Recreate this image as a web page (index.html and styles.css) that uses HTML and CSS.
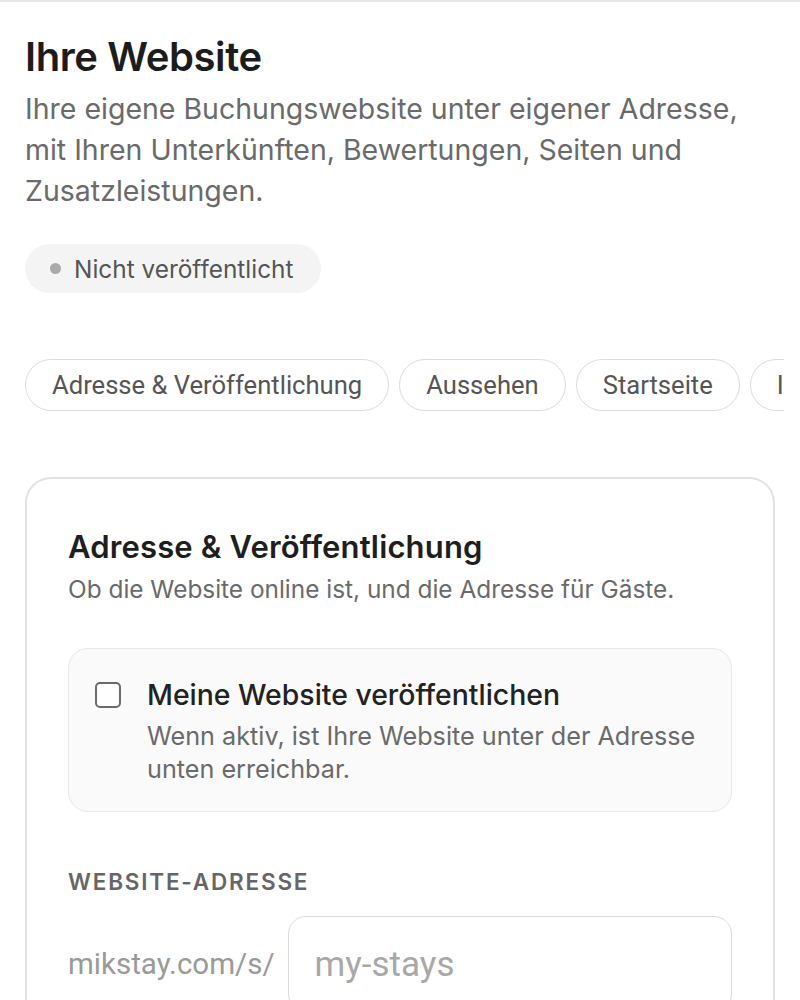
FILE: index.html
```html
<!DOCTYPE html>
<html lang="de">
<head>
<meta charset="utf-8">
<title>Ihre Website</title>
<link rel="stylesheet" href="styles.css">
</head>
<body>
<div class="page">
  <h1 class="title">Ihre Website</h1>
  <p class="lead">Ihre eigene Buchungswebsite unter eigener Adresse, mit Ihren Unterkünften, Bewertungen, Seiten und Zusatzleistungen.</p>
  <div class="status"><span class="dot"></span>Nicht veröffentlicht</div>

  <nav class="tabs">
    <button class="tab">Adresse &amp; Veröffentlichung</button>
    <button class="tab">Aussehen</button>
    <button class="tab">Startseite</button>
    <button class="tab">Inhalte</button>
  </nav>

  <section class="card">
    <h2 class="card-title">Adresse &amp; Veröffentlichung</h2>
    <p class="card-sub">Ob die Website online ist, und die Adresse für Gäste.</p>

    <label class="option">
      <span class="checkbox"></span>
      <span class="option-text">
        <span class="option-title">Meine Website veröffentlichen</span>
        <span class="option-desc">Wenn aktiv, ist Ihre Website unter der Adresse unten erreichbar.</span>
      </span>
    </label>

    <div class="field-label">WEBSITE-ADRESSE</div>
    <div class="address">
      <span class="prefix">mikstay.com/s/</span>
      <div class="input"><span class="placeholder">my-stays</span></div>
    </div>
  </section>
</div>
</body>
</html>
```

FILE: styles.css
```css
* { box-sizing: border-box; }
html, body { margin: 0; padding: 0; background: #fff; }
body {
  font-family: Inter, "Noto Sans", sans-serif;
  color: #222;
  border-top: 2px solid #e6e6e6;
  overflow: hidden;
}
.page {
  padding: 30px 25px 0 25px;
}
.title {
  margin: 0;
  font-size: 40px;
  line-height: 50px;
  font-weight: 600;
  letter-spacing: -0.01em;
  color: #1c1c1c;
}
.lead {
  margin: 6px 0 0 0;
  font-size: 28.5px;
  line-height: 41px;
  color: #6a6a6a;
  max-width: 740px;
}
.status {
  display: inline-flex;
  align-items: center;
  gap: 13px;
  margin-top: 33px;
  height: 49px;
  padding: 0 28px 0 25px;
  border-radius: 999px;
  background: #f4f4f4;
  font-size: 24.4px;
  font-weight: 400;
  color: #555;
}
.dot {
  width: 11px;
  height: 11px;
  border-radius: 50%;
  background: #aaaaaa;
}
.tabs {
  display: flex;
  gap: 10px;
  margin-top: 66px;
  margin-right: -9px;
  overflow: hidden;
}
.tab {
  flex: 0 0 auto;
  height: 52px;
  padding: 0 26px;
  border: 1.5px solid #dcdcdc;
  border-radius: 999px;
  background: #fff;
  font-family: Roboto, "Liberation Sans", sans-serif;
  font-size: 25.6px;
  color: #555;
}
.card {
  margin-top: 66px;
  border: 2px solid #e2e2e2;
  border-radius: 26px;
  padding: 48px 41px 40px 41px;
}
.card-title {
  margin: 0;
  font-size: 31px;
  line-height: 40px;
  font-weight: 600;
  letter-spacing: 0.005em;
  color: #1e1e1e;
}
.card-sub {
  margin: 6px 0 0 0;
  font-size: 24.4px;
  line-height: 32px;
  color: #6a6a6a;
}
.option {
  display: flex;
  align-items: flex-start;
  gap: 26px;
  margin-top: 43px;
  padding: 27px 26px 25px 26px;
  background: #fafafa;
  border: 1.5px solid #e8e8e8;
  border-radius: 20px;
}
.checkbox {
  flex: 0 0 auto;
  width: 26px;
  height: 26px;
  margin-top: 6px;
  border: 2px solid #6b6b6b;
  border-radius: 5px;
  background: #fff;
}
.option-text {
  display: flex;
  flex-direction: column;
}
.option-title {
  font-size: 28.4px;
  line-height: 38px;
  font-weight: 500;
  color: #222;
}
.option-desc {
  margin-top: 6px;
  font-size: 25.2px;
  line-height: 33px;
  color: #6a6a6a;
}
.field-label {
  margin-top: 55px;
  font-size: 22.5px;
  line-height: 30px;
  font-weight: 600;
  letter-spacing: 0.08em;
  color: #666;
}
.address {
  display: flex;
  align-items: center;
  gap: 13px;
  margin-top: 19px;
}
.prefix {
  font-family: Roboto, "Liberation Sans", sans-serif;
  font-size: 29.5px;
  color: #9a9a9a;
}
.input {
  flex: 1 1 auto;
  height: 96px;
  padding: 0 26px;
  border: 1.5px solid #dcdcdc;
  border-radius: 18px;
  display: flex;
  align-items: center;
}
.placeholder {
  font-family: Roboto, "Liberation Sans", sans-serif;
  font-size: 35px;
  color: #a8a8a8;
}
```
